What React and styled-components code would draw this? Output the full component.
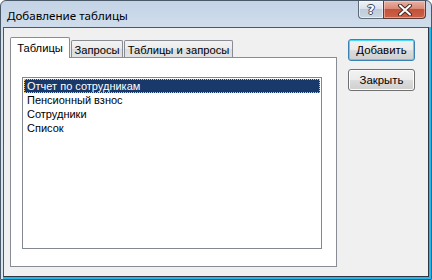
import React from "react";
import styled, { createGlobalStyle } from "styled-components";

const GlobalStyle = createGlobalStyle`
  html, body {
    margin: 0;
    padding: 0;
    background: #ffffff;
  }
  body {
    font-family: "Liberation Sans", Arial, sans-serif;
  }
`;

const Window = styled.div`
  width: 432px;
  height: 280px;
  box-sizing: border-box;
  border: 1px solid #4a5968;
  border-radius: 6px 6px 0 0;
  background: linear-gradient(#c4d4e6, #d5e1ee 40px, #d9e4f0);
  display: flex;
  flex-direction: column;
  overflow: hidden;
`;

const TitleBar = styled.div`
  height: 26px;
  flex: none;
  display: flex;
  align-items: flex-start;
  padding-left: 6px;
`;

const Title = styled.div`
  font-family: "Noto Sans", "Liberation Sans", sans-serif;
  font-size: 11.6px;
  line-height: 26px;
  padding-top: 2px;
  color: #000;
`;

const CaptionButtons = styled.div`
  margin-left: auto;
  margin-right: 5px;
  display: flex;
`;

const HelpButton = styled.div`
  width: 25px;
  height: 18px;
  box-sizing: border-box;
  border: 1px solid #5d6b79;
  border-top: none;
  border-right: none;
  border-radius: 0 0 0 4px;
  background: linear-gradient(#eef3f8, #d9e2ec 45%, #bfcbd8 50%, #cbd6e2);
  box-shadow: inset 0 0 0 1px rgba(255, 255, 255, 0.55);
  display: flex;
  align-items: center;
  justify-content: center;
  font-family: "DejaVu Sans", sans-serif;
  font-weight: bold;
  font-size: 13px;
  color: #ffffff;
  text-shadow: 1px 0 0 #3b4652, -1px 0 0 #3b4652, 0 1px 0 #3b4652, 0 -1px 0 #3b4652;
`;

const CloseButton = styled.div`
  width: 43px;
  height: 18px;
  box-sizing: border-box;
  border: 1px solid #5a3c36;
  border-top: none;
  border-radius: 0 0 4px 0;
  background: linear-gradient(#eab1a4, #d98a77 45%, #c5513a 50%, #cc6248);
  box-shadow: inset 0 0 0 1px rgba(255, 220, 210, 0.5);
  display: flex;
  align-items: center;
  justify-content: center;
`;

const ClientFrame = styled.div`
  flex: 1;
  display: flex;
  margin-left: 2px;
  border-right: 2px solid #25b6ea;
  border-bottom: 2px solid #25b6ea;
`;

const Client = styled.div`
  flex: 1;
  display: flex;
  align-items: flex-start;
  gap: 11px;
  padding: 9px 0 0 6px;
  background: #f0f0f0;
  border: 1px solid #4b5865;
  border-right-color: #2c3540;
  border-bottom-color: #2c3540;
`;

const TabArea = styled.div`
  width: 327px;
  display: flex;
  flex-direction: column;
`;

const TabStrip = styled.div`
  height: 20px;
  display: flex;
  align-items: flex-end;
  position: relative;
  z-index: 1;
`;

const Tab = styled.div`
  width: ${(p) => p.$width}px;
  height: ${(p) => (p.$active ? 21 : 17)}px;
  margin-bottom: ${(p) => (p.$active ? -1 : 0)}px;
  margin-left: ${(p) => (p.$active ? 0 : 1)}px;
  box-sizing: border-box;
  border: 1px solid #898c95;
  border-bottom: none;
  border-radius: 2px 2px 0 0;
  background: ${(p) =>
    p.$active ? "#ffffff" : "linear-gradient(#f3f3f3, #ebebeb 50%, #dddddd 50%, #e3e3e3)"};
  display: flex;
  align-items: center;
  justify-content: center;
  padding-top: ${(p) => (p.$active ? 0 : 2)}px;
  font-size: 11.2px;
  color: #000;
  white-space: nowrap;
`;

const Panel = styled.div`
  height: 210px;
  box-sizing: border-box;
  border: 1px solid #898c95;
  background: #ffffff;
  padding: 19px 14px 17px 11px;
`;

const ListBox = styled.div`
  height: 100%;
  box-sizing: border-box;
  border: 1px solid #828790;
  background: #ffffff;
  padding: 1px;
`;

const Item = styled.div`
  height: 14px;
  line-height: 14px;
  box-sizing: border-box;
  padding-left: 3px;
  font-size: 11px;
  white-space: nowrap;
  color: ${(p) => (p.$selected ? "#ffffff" : "#000000")};
  background: ${(p) => (p.$selected ? "#19396a" : "transparent")};
  outline: ${(p) => (p.$selected ? "1px dotted #e6c27a" : "none")};
  outline-offset: -1px;
`;

const ButtonCol = styled.div`
  width: 67px;
  margin-top: 2px;
  display: flex;
  flex-direction: column;
  gap: 8px;
`;

const Button = styled.div`
  height: 22px;
  box-sizing: border-box;
  border: 1px solid ${(p) => (p.$default ? "#3c7fb1" : "#707070")};
  border-radius: 3px;
  background: linear-gradient(#f2f2f2, #ebebeb 50%, #dddddd 50%, #cfcfcf);
  box-shadow: inset 0 0 0 1px ${(p) => (p.$default ? "#48d8fb" : "#fcfcfc")};
  display: flex;
  align-items: center;
  justify-content: center;
  font-size: 11.4px;
  color: #000;
`;

const tabs = [
  { label: "Таблицы", width: 60, active: true },
  { label: "Запросы", width: 52 },
  { label: "Таблицы и запросы", width: 109 },
];

const items = ["Отчет по сотрудникам", "Пенсионный взнос", "Сотрудники", "Список"];

export default function App() {
  return (
    <>
      <GlobalStyle />
      <Window>
        <TitleBar>
          <Title>Добавление таблицы</Title>
          <CaptionButtons>
            <HelpButton>?</HelpButton>
            <CloseButton>
              <svg width="16" height="12" viewBox="0 0 16 12">
                <path d="M3 1.5 L13 10.5 M13 1.5 L3 10.5" stroke="#4a2a24" strokeWidth="4" strokeLinecap="round" />
                <path d="M3 1.5 L13 10.5 M13 1.5 L3 10.5" stroke="#ffffff" strokeWidth="2" strokeLinecap="round" />
              </svg>
            </CloseButton>
          </CaptionButtons>
        </TitleBar>
        <ClientFrame>
          <Client>
            <TabArea>
              <TabStrip>
                {tabs.map((t) => (
                  <Tab key={t.label} $width={t.width} $active={t.active}>
                    {t.label}
                  </Tab>
                ))}
              </TabStrip>
              <Panel>
                <ListBox>
                  {items.map((it, i) => (
                    <Item key={it} $selected={i === 0}>
                      {it}
                    </Item>
                  ))}
                </ListBox>
              </Panel>
            </TabArea>
            <ButtonCol>
              <Button $default>Добавить</Button>
              <Button>Закрыть</Button>
            </ButtonCol>
          </Client>
        </ClientFrame>
      </Window>
    </>
  );
}
